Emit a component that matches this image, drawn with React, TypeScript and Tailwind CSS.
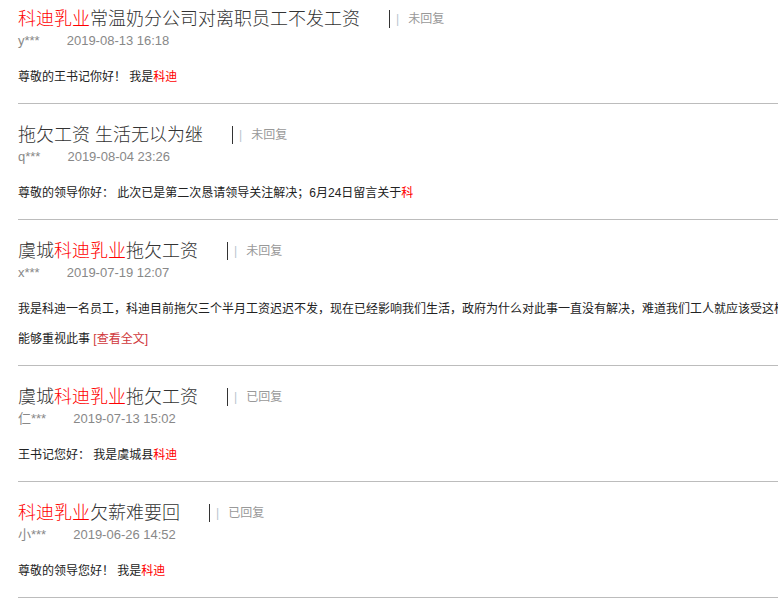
type Part = { t: string; red?: boolean };

type Item = {
  title: Part[];
  status: string;
  user: string;
  date: string;
  body: Part[];
  more?: string;
};

const items: Item[] = [
  {
    title: [{ t: "科迪乳业", red: true }, { t: "常温奶分公司对离职员工不发工资" }],
    status: "未回复",
    user: "y***",
    date: "2019-08-13 16:18",
    body: [{ t: "尊敬的王书记你好！ 我是" }, { t: "科迪", red: true }],
  },
  {
    title: [{ t: "拖欠工资 生活无以为继" }],
    status: "未回复",
    user: "q***",
    date: "2019-08-04 23:26",
    body: [{ t: "尊敬的领导你好： 此次已是第二次恳请领导关注解决；6月24日留言关于" }, { t: "科", red: true }],
  },
  {
    title: [{ t: "虞城" }, { t: "科迪乳业", red: true }, { t: "拖欠工资" }],
    status: "未回复",
    user: "x***",
    date: "2019-07-19 12:07",
    body: [
      {
        t: "我是科迪一名员工，科迪目前拖欠三个半月工资迟迟不发，现在已经影响我们生活，政府为什么对此事一直没有解决，难道我们工人就应该受这样的待遇吗？希望政府",
      },
    ],
    more: "能够重视此事",
  },
  {
    title: [{ t: "虞城" }, { t: "科迪乳业", red: true }, { t: "拖欠工资" }],
    status: "已回复",
    user: "仁***",
    date: "2019-07-13 15:02",
    body: [{ t: "王书记您好： 我是虞城县" }, { t: "科迪", red: true }],
  },
  {
    title: [{ t: "科迪乳业", red: true }, { t: "欠薪难要回" }],
    status: "已回复",
    user: "小***",
    date: "2019-06-26 14:52",
    body: [{ t: "尊敬的领导您好！ 我是" }, { t: "科迪", red: true }],
  },
];

const Parts = ({ parts }: { parts: Part[] }) => (
  <>
    {parts.map((p, i) =>
      p.red ? (
        <span key={i} className="text-[#ff0000]">
          {p.t}
        </span>
      ) : (
        <span key={i}>{p.t}</span>
      )
    )}
  </>
);

const App = () => {
  return (
    <div
      className="w-[778px] h-[611px] overflow-hidden bg-white"
      style={{ fontFamily: '"Liberation Sans", "Noto Sans CJK SC", sans-serif' }}
    >
      <ul className="w-[1100px] pl-[18px]">
        {items.map((it, idx) => (
          <li
            key={idx}
            className={`border-b border-[#bcbcbc] pb-[11px] ${idx === 0 ? "pt-[7px]" : "pt-[19px]"}`}
          >
            <div className="flex items-center h-[24px]">
              <span className="text-[18px] leading-[24px] font-light text-[#333] whitespace-nowrap">
                <Parts parts={it.title} />
              </span>
              <span className="ml-[29px] w-px h-[18px] bg-[#333]" />
              <span className="ml-[6px] text-[12px] text-[#b8c4d0]">|</span>
              <span className="ml-[9px] text-[12px] text-[#999]">{it.status}</span>
            </div>
            <div className="flex h-[20px] items-center text-[13px] text-[#888] whitespace-nowrap">
              <span className="mr-[27px]">{it.user}</span>
              <span>{it.date}</span>
            </div>
            <div className="mt-[11px] text-[12px] leading-[30px] text-[#222] whitespace-nowrap">
              <div>
                <Parts parts={it.body} />
              </div>
              {it.more && (
                <div>
                  {it.more} <span className="text-[#d0373b]">[查看全文]</span>
                </div>
              )}
            </div>
          </li>
        ))}
      </ul>
    </div>
  );
};

export default App;
